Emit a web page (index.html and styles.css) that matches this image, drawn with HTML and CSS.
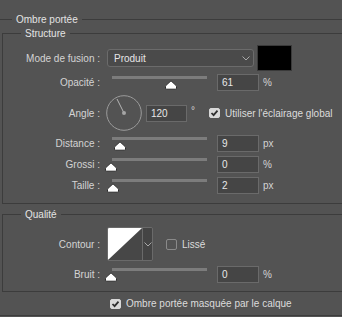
FILE: index.html
```html
<!DOCTYPE html>
<html lang="fr">
<head>
    <meta charset="UTF-8">
    <title>Ombre portée</title>
    <link rel="stylesheet" href="styles.css">
</head>
<body>
    <div class="panel">
        <div class="outer">
            <div class="group-title">Ombre portée</div>

            <div class="box">
                <div class="group-title">Structure</div>

                <div class="row row-mode">
                    <span class="label">Mode de fusion :</span>
                    <div class="select">
                        <span>Produit</span>
                        <svg class="chevron" width="8" height="5" viewBox="0 0 8 5"><path d="M0.5 0.5 L4 4 L7.5 0.5" fill="none" stroke="#a8a8a8" stroke-width="1"/></svg>
                    </div>
                    <div class="swatch"></div>
                </div>

                <div class="row">
                    <span class="label">Opacité :</span>
                    <div class="slider">
                        <div class="track"></div>
                        <svg class="thumb" style="left:60px" width="12" height="10" viewBox="0 0 12 10"><path d="M6 0.8 L11.2 5.6 Q11.5 6 11.5 6.6 V8.2 Q11.5 9.2 10.5 9.2 H1.5 Q0.5 9.2 0.5 8.2 V6.6 Q0.5 6 0.8 5.6 Z" fill="#fff" stroke="#2b2b2b"/></svg>
                    </div>
                    <div class="field">61</div>
                    <span class="unit">%</span>
                </div>

                <div class="row row-angle">
                    <span class="label">Angle :</span>
                    <svg class="dial" width="36" height="36" viewBox="0 0 36 36">
                        <circle cx="18" cy="18" r="17.3" fill="none" stroke="#9b9b9b" stroke-width="1"/>
                        <line x1="18" y1="18" x2="11" y2="4" stroke="#b5b5b5" stroke-width="1"/>
                        <circle cx="18" cy="18" r="2" fill="#a5a5a5"/>
                    </svg>
                    <div class="field field-angle">120</div>
                    <span class="unit deg">°</span>
                    <span class="check checked">
                        <svg width="11" height="10" viewBox="0 0 11 10"><path d="M2.5 5 L4.6 7.2 L8.5 2.6" fill="none" stroke="#2e2e2e" stroke-width="1.8"/></svg>
                    </span>
                    <span class="check-label">Utiliser l'éclairage global</span>
                </div>

                <div class="row">
                    <span class="label">Distance :</span>
                    <div class="slider">
                        <div class="track"></div>
                        <svg class="thumb" style="left:9px" width="12" height="10" viewBox="0 0 12 10"><path d="M6 0.8 L11.2 5.6 Q11.5 6 11.5 6.6 V8.2 Q11.5 9.2 10.5 9.2 H1.5 Q0.5 9.2 0.5 8.2 V6.6 Q0.5 6 0.8 5.6 Z" fill="#fff" stroke="#2b2b2b"/></svg>
                    </div>
                    <div class="field">9</div>
                    <span class="unit">px</span>
                </div>

                <div class="row">
                    <span class="label">Grossi :</span>
                    <div class="slider">
                        <div class="track"></div>
                        <svg class="thumb" style="left:0px" width="12" height="10" viewBox="0 0 12 10"><path d="M6 0.8 L11.2 5.6 Q11.5 6 11.5 6.6 V8.2 Q11.5 9.2 10.5 9.2 H1.5 Q0.5 9.2 0.5 8.2 V6.6 Q0.5 6 0.8 5.6 Z" fill="#fff" stroke="#2b2b2b"/></svg>
                    </div>
                    <div class="field">0</div>
                    <span class="unit">%</span>
                </div>

                <div class="row">
                    <span class="label">Taille :</span>
                    <div class="slider">
                        <div class="track"></div>
                        <svg class="thumb" style="left:2px" width="12" height="10" viewBox="0 0 12 10"><path d="M6 0.8 L11.2 5.6 Q11.5 6 11.5 6.6 V8.2 Q11.5 9.2 10.5 9.2 H1.5 Q0.5 9.2 0.5 8.2 V6.6 Q0.5 6 0.8 5.6 Z" fill="#fff" stroke="#2b2b2b"/></svg>
                    </div>
                    <div class="field">2</div>
                    <span class="unit">px</span>
                </div>
            </div>

            <div class="box box-quality">
                <div class="group-title">Qualité</div>

                <div class="row row-contour">
                    <span class="label">Contour :</span>
                    <div class="contour">
                        <svg class="curve" width="34" height="32" viewBox="0 0 34 32"><rect width="34" height="32" fill="#474747"/><path d="M0 0 H34 L0 32 Z" fill="#fff"/></svg>
                        <div class="contour-drop">
                            <svg width="8" height="5" viewBox="0 0 8 5"><path d="M0.5 0.5 L4 4 L7.5 0.5" fill="none" stroke="#a8a8a8" stroke-width="1"/></svg>
                        </div>
                    </div>
                    <span class="check"></span>
                    <span class="check-label">Lissé</span>
                </div>

                <div class="row">
                    <span class="label">Bruit :</span>
                    <div class="slider">
                        <div class="track"></div>
                        <svg class="thumb" style="left:0px" width="12" height="10" viewBox="0 0 12 10"><path d="M6 0.8 L11.2 5.6 Q11.5 6 11.5 6.6 V8.2 Q11.5 9.2 10.5 9.2 H1.5 Q0.5 9.2 0.5 8.2 V6.6 Q0.5 6 0.8 5.6 Z" fill="#fff" stroke="#2b2b2b"/></svg>
                    </div>
                    <div class="field">0</div>
                    <span class="unit">%</span>
                </div>
            </div>

            <div class="row row-bottom">
                <span class="check checked">
                    <svg width="11" height="10" viewBox="0 0 11 10"><path d="M2.5 5 L4.6 7.2 L8.5 2.6" fill="none" stroke="#2e2e2e" stroke-width="1.8"/></svg>
                </span>
                <span class="check-label">Ombre portée masquée par le calque</span>
            </div>
        </div>
    </div>
</body>
</html>
```

FILE: styles.css
```css
body {
    margin: 0;
    background-color: #535353;
    font-family: "Liberation Sans", Arial, sans-serif;
    font-size: 10px;
    color: #d4d4d4;
}
.panel {
    width: 342px;
    height: 317px;
    overflow: hidden;
}
.outer {
    margin-top: 19px;
    width: 342px;
    border-top: 1px solid #3c3c3c;
    border-bottom: 1px solid #3c3c3c;
}
.group-title {
    width: max-content;
    margin: -7px 0 0 12px;
    padding: 0 4px;
    line-height: 14px;
    background-color: #535353;
    color: #e4e4e4;
}
.box {
    width: 400px;
    margin: 6px 0 0 2px;
    padding-bottom: 7px;
    border: 1px solid #3c3c3c;
}
.box .group-title {
    margin-left: 18px;
}
.box-quality {
    margin-top: 10px;
    padding-bottom: 6px;
}
.row {
    display: flex;
    align-items: center;
    height: 21px;
}
.label {
    width: 97px;
    text-align: right;
    flex-shrink: 0;
}
.row-mode {
    height: 26px;
    margin: 4px 0 1px;
}
.select {
    display: flex;
    align-items: center;
    justify-content: space-between;
    box-sizing: border-box;
    width: 147px;
    height: 18px;
    margin-left: 7px;
    padding: 0 3px 0 6px;
    background-color: #4a4a4a;
    border: 1px solid #6b6b6b;
    border-radius: 3px;
    color: #e6e6e6;
}
.swatch {
    box-sizing: border-box;
    width: 35px;
    height: 26px;
    margin-left: 3px;
    background-color: #000;
    border: 1px solid #3a3a3a;
}
.slider {
    position: relative;
    width: 108px;
    height: 21px;
    margin-left: 5px;
}
.track {
    width: 95px;
    height: 3px;
    margin: 4px 0 0 7px;
    background-color: #7c7c7c;
}
.thumb {
    position: absolute;
    top: 8px;
}
.field {
    box-sizing: border-box;
    width: 42px;
    height: 17px;
    margin-left: 4px;
    padding-left: 4px;
    line-height: 15px;
    background-color: #454545;
    border: 1px solid #6a6a6a;
    color: #e8e8e8;
}
.unit {
    margin-left: 4px;
}
.row-angle {
    height: 40px;
}
.dial {
    margin-left: 6px;
}
.field-angle {
    width: 41px;
}
.deg {
    width: 14px;
    margin-top: -6px;
}
.check {
    box-sizing: border-box;
    width: 11px;
    height: 10px;
    margin-left: 4px;
    border: 1px solid #8a8a8a;
    border-radius: 2px;
}
.check svg {
    display: block;
    margin: -1px;
}
.check.checked {
    background-color: #d8d8d8;
    border-color: #d8d8d8;
}
.check-label {
    margin-left: 5px;
    color: #dcdcdc;
}
.row-contour {
    height: 34px;
    margin: 5px 0 3px;
}
.contour {
    display: flex;
    box-sizing: border-box;
    width: 46px;
    height: 34px;
    margin-left: 7px;
    border: 1px solid #6a6a6a;
    border-radius: 2px;
    overflow: hidden;
}
.curve {
    display: block;
}
.contour-drop {
    display: flex;
    align-items: center;
    justify-content: center;
    flex: 1;
    background-color: #444;
    border-left: 1px solid #6a6a6a;
}
.row-contour .check {
    width: 11px;
    height: 11px;
    margin-left: 13px;
}
.row-bottom {
    height: 23px;
    padding-left: 110px;
}
.row-bottom .check {
    margin-left: 0;
}
```
